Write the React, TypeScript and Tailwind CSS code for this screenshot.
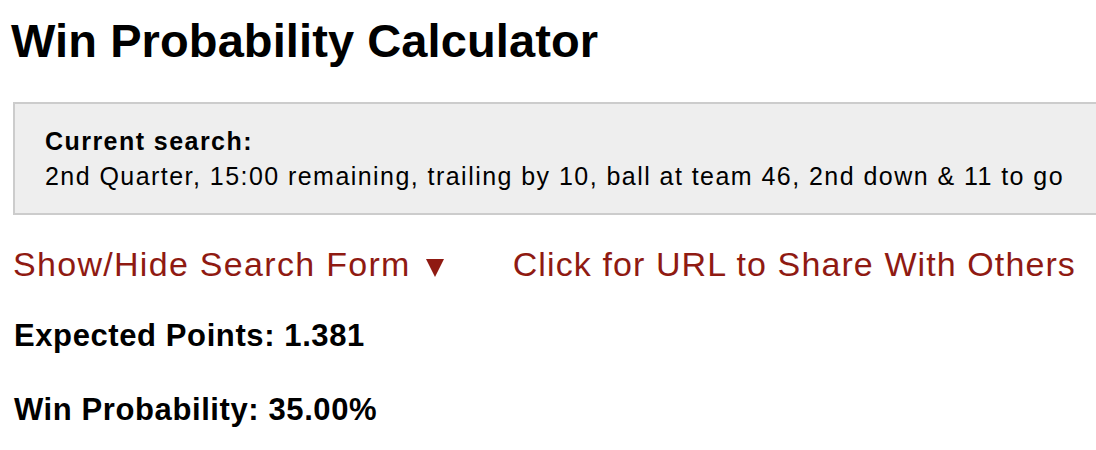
import React from "react";

export default function App() {
  return (
    <div
      className="w-[1096px] h-[450px] overflow-hidden bg-white text-black"
      style={{ fontFamily: '"Liberation Sans", Arial, Helvetica, sans-serif' }}
    >
      <div className="flex flex-col">
        <h1 className="mt-[17px] ml-[11px] text-[47px] leading-none font-bold tracking-[0.1px]">
          Win Probability Calculator
        </h1>

        <div className="mt-[38px] ml-[13px] w-[1120px] border-2 border-[#cccccc] bg-[#eeeeee] pl-[30px] pt-[20px] pb-[19px] text-[25px] leading-[35px] tracking-[1.45px]">
          <div className="font-bold">Current search:</div>
          <div>2nd Quarter, 15:00 remaining, trailing by 10, ball at team 46, 2nd down &amp; 11 to go</div>
        </div>

        <div className="mt-[32px] ml-[13px] flex items-baseline gap-[69px] text-[34px] leading-none text-[#8f1a12]">
          <a className="flex items-baseline gap-[15px] cursor-pointer tracking-[1.3px]">
            <span>Show/Hide Search Form</span>
            <svg width="18" height="18" viewBox="0 0 18 18" className="translate-y-[1px]">
              <polygon points="0,0 18,0 9,18" fill="#8f1a12" />
            </svg>
          </a>
          <a className="cursor-pointer tracking-[1.1px]">Click for URL to Share With Others</a>
        </div>

        <div className="mt-[39px] ml-[14px] text-[31px] leading-none font-bold tracking-[0.6px]">
          Expected Points: 1.381
        </div>
        <div className="mt-[43px] ml-[14px] text-[31px] leading-none font-bold tracking-[0.6px]">
          Win Probability: 35.00%
        </div>
      </div>
    </div>
  );
}
